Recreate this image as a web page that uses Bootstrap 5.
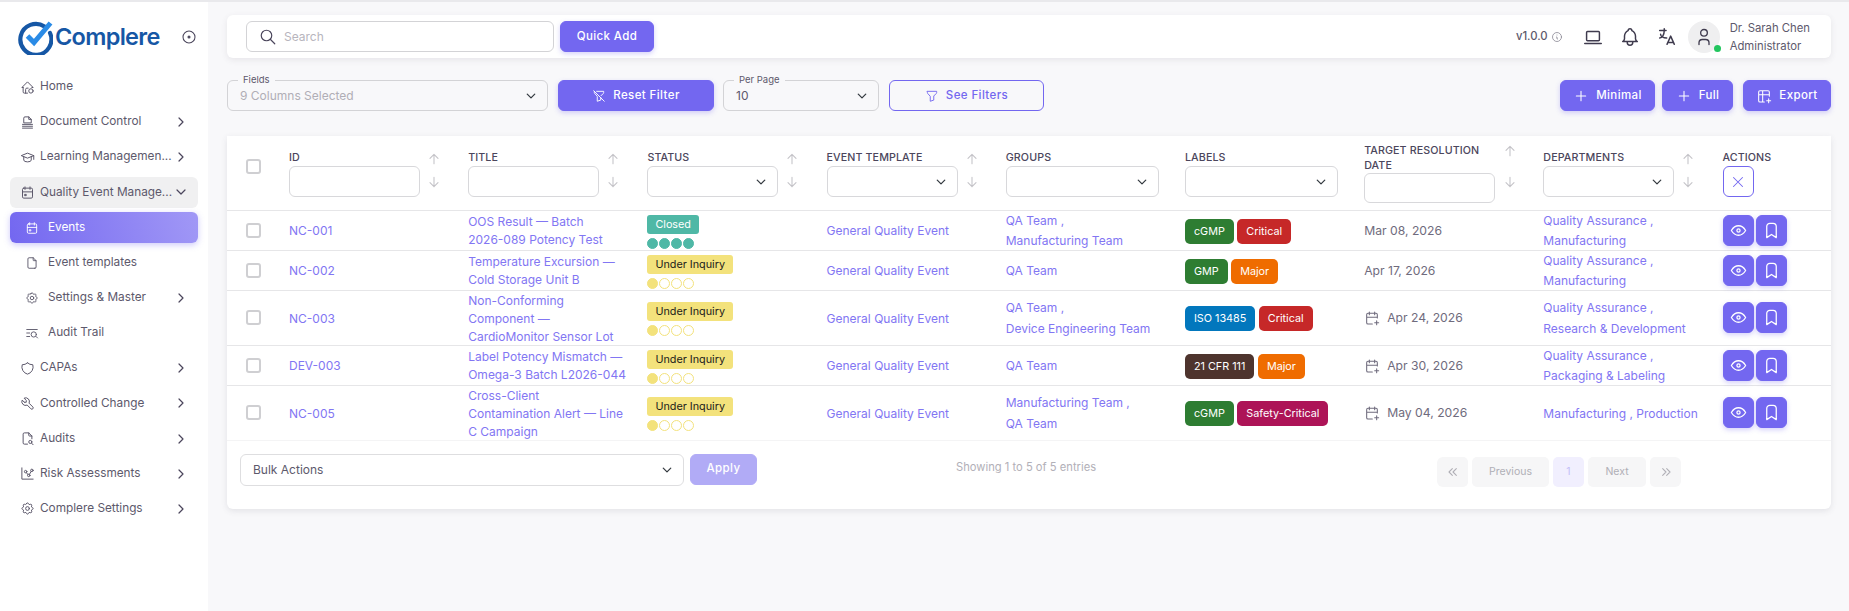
<!DOCTYPE html>
<html lang="en"><head><meta charset="utf-8"><title>Complere</title>
<link rel="stylesheet" href="https://cdn.jsdelivr.net/npm/bootstrap@5.3.0/dist/css/bootstrap.min.css">
<style>
:root{--brand:#7367f0;--ink:#5d596c;--linkc:#8276f3}
html,body{height:100%}
body{font-family:Inter,"Liberation Sans",sans-serif;font-size:12px;background:#f8f8fa;color:var(--ink);border-top:2px solid #e9e9ec;overflow:hidden}
.ico{width:16px;height:16px;fill:none;stroke:currentColor;stroke-width:1.6;stroke-linecap:round;stroke-linejoin:round;flex:none}
.shell{height:100%}
.side{width:208px;background:#fff;flex:none;padding:0 10px}
.brandrow{height:69.500px;padding-left:7px}
.brandtxt{font-size:23.500px;font-weight:600;color:#1657a5;letter-spacing:-.7px;margin-left:2px;line-height:1}
.target{margin-left:auto;margin-right:1px;color:#4b465c}
.sideitem{height:31px;margin-bottom:4.170px;padding:0 9px 0 10px;border-radius:6px;color:var(--ink);font-size:11.800px;text-decoration:none;gap:5px}
.sideitem .lbl{flex:1;min-width:0;white-space:nowrap}
.sideitem .ico{width:15px;height:15px}
.sideitem .chev{width:16px;height:16px;stroke-width:1.8;color:#4b465c}
.sideitem.open{background:#f0f0f1}
.sideitem.sub{padding-left:15px;gap:9px}
.sideitem.sub .ico{width:14px;height:14px}
.sideitem.sub .chev{width:16px;height:16px}
.sideitem.cur{background:linear-gradient(72deg,#7367f0,#a198f6);color:#fff;box-shadow:0 2px 6px rgba(115,103,240,.35)}
.mainpane{min-width:0;padding:13px 18px 0 19px}
.topbar{height:43px;background:#fff;border-radius:6px;box-shadow:0 2px 6px rgba(75,70,92,.1);padding:0 21px 0 19px}
.searchbox{width:308px;height:31px;border:1px solid #d3d3d6;border-radius:6px;padding-left:12px;gap:5px;color:#4b465c}
.searchbox .ico{width:18px;height:18px}
.searchbox input{border:0;outline:0;flex:1;min-width:0;font-size:12px;background:transparent}
.searchbox input::placeholder{color:#b7b5bd}
.btn-brand{--bs-btn-color:#fff;--bs-btn-bg:var(--brand);--bs-btn-border-color:var(--brand);--bs-btn-hover-color:#fff;--bs-btn-hover-bg:#6659e8;--bs-btn-hover-border-color:#6659e8;--bs-btn-font-size:11.500px;--bs-btn-font-weight:500;--bs-btn-border-radius:6px;--bs-btn-padding-y:0;--bs-btn-padding-x:0;height:31px;letter-spacing:.4px;box-shadow:0 2px 5px rgba(115,103,240,.3);gap:7px}
.quick{width:94px;margin-left:6px}
.ver{font-weight:500;font-size:11.300px;color:#5d596c;gap:3px}
.ver .ico{width:12px;height:12px;color:#8a8894}
.topico{color:#3f3b4e}
.topico .ico{width:22px;height:22px}
.gap-a{margin-left:19px}.gap-b{margin-left:15px}.gap-c{margin-left:10px}
.avatar{width:32px;height:32px;border-radius:50%;background:#efeff0;color:#3f3b4e}
.avatar .ico{width:20px;height:20px}
.onl{position:absolute;right:-1px;bottom:1px;width:7px;height:7px;border-radius:50%;background:#22c55e}
.who{font-size:11.300px;line-height:18px;margin-left:10px;color:#5d596c}
.filters{margin-top:22px;height:31px}
.fieldwrap{position:relative}
.fieldwrap>span{position:absolute;left:11px;top:-6px;background:#f8f8fa;padding:0 5px;font-size:9.500px;line-height:12px;color:#5d596c;z-index:1}
.sel{height:31px;padding:0 28px 0 12px;font-size:12px;border-color:#d3d3d6;border-radius:6px;background-color:transparent;color:#5d596c;background-size:12px 10px;background-position:right 10px center}
.sel.muted{color:#b0aeb6}
.wf{width:321px}.wr{width:156px;margin-left:10px}.wp{width:156px;margin-left:9px}
.wsee{width:155px;margin-left:10px;height:31px;border:1px solid var(--brand);color:var(--brand);border-radius:6px;font-size:11.500px;gap:7px;background:transparent;letter-spacing:.4px;font-weight:500}
.wmin{width:95px}.wful{width:71px;margin-left:7px}.wexp{width:88px;margin-left:10px}
.smi{width:14px;height:14px}
.panel{margin-top:25px;height:373px;background:#fff;border:0;border-radius:0 0 6px 6px;box-shadow:0 2px 6px rgba(75,70,92,.12)}
.grid{table-layout:fixed;width:100%;margin:0;--bs-table-border-color:#e6e6e8;font-size:12px}
.grid th,.grid td{padding:0 0 0 10px;vertical-align:middle;color:inherit}
.grid tbody td{padding-top:2px}
.grid tbody td.c0,.grid tbody td:last-child{padding-top:0}
.grid thead th{height:74px;padding-top:14px;vertical-align:top;font-weight:500;font-size:10.700px;text-transform:uppercase;color:#4b465c;line-height:16px;letter-spacing:.1px}
.grid thead th.tall{padding-top:7px;line-height:15px}
.grid .c0{width:52px;padding-left:19px}
.grid .cn{width:179.200px}
.grid .cl{width:118.400px}
.hcell{width:131px}
.hwide{width:153px}
.hbox{height:31px;width:100%;border:1px solid #d8d8db;border-radius:6px;background-color:#fff;display:block}
.grid thead th.tall .hbox{height:30px}
.arrows{margin-left:6px;width:16px;margin-top:1px;gap:7px;color:#c4c3c8}
.tall .arrows{margin-top:0;gap:15px;margin-left:7px}
.arrows .ico{width:16px;height:16px}
.grid .form-check-input{width:15px;height:15px;margin:0;border:2px solid #cfcfd2;border-radius:3px;display:block}
.grid thead .form-check-input{margin-top:9px;margin-left:0}
.clearb{width:31px;height:31px;border:1px solid var(--brand);border-radius:6px;color:var(--brand);background:#fff;padding:0}
.clearb .ico{width:18px;height:18px;stroke-width:1.400}
.r40 td{height:40px}.r55 td{height:55px}
.grid tbody tr:last-child td{border-color:#f4f4f5}
.grid a{color:var(--linkc);text-decoration:none}
.ttl{line-height:18px;display:block;margin:-2px 0}
.two{line-height:20.500px;display:block;margin:-2px 0}
.grid td.dt,.dt{color:#6f6b7d;font-size:12.200px}
.dt{gap:7px}
.dt .ico{width:16px;height:16px}
.stat{display:block;width:max-content;height:19px;line-height:19px;padding:0 8px;border-radius:3px;font-size:10.800px;font-weight:400;margin-top:1px}
.st-c{background:#4fb8a6;color:#fff}
.st-u{background:#f3e27c;color:#1b1b1b}
.dots{gap:1px;margin-top:4px}
.dots i{display:block;width:11px;height:11px;border-radius:50%;border:1px solid #f3e27c}
.dots i.on{background:#f3e27c}
.dots.tl i{border-color:#4fb8a6;background:#4fb8a6}
.lab{display:inline-block;height:25px;line-height:25px;padding:0 9px;border-radius:5px;color:#fff;font-size:10.800px;margin-right:3.500px}
.g{background:#2e7d32}.rd{background:#c62828}.og{background:#ef6c00}.bl{background:#0277bd}.br{background:#4e342e}.mg{background:#ad1457}
.act{width:31px;height:31px;padding:0;margin-right:2px}
.act .ico{width:19px;height:19px}
.foot{padding:13px 0 0 13px}
.bulk{width:444px;flex:none;height:32px;padding-left:12px;border-color:#dedee0;background-color:#fff}
.applyb{width:67px;flex:none;margin-left:6px;opacity:.55;box-shadow:none;height:31px}
.shown{margin-left:199px;margin-top:5px;color:#b2b0b8;font-size:11.200px;line-height:16px;white-space:nowrap}
.pager{margin:3px 150px 0 auto;gap:5px;--bs-pagination-border-width:0}
.pager .page-link{height:30px;line-height:30px;padding:0;text-align:center;background:#f6f6f7;color:#b0afb6;border-radius:5px;font-size:10.500px;border:0}
.pager .page-link .ico{width:16px;height:16px}
.pager .cu .page-link{background:#f1effe;color:#c4bff8}
.pw1{width:31px}.pw2{width:76px}.pw3{width:30px}.pw4{width:57px}
</style></head>
<body>
<svg width="0" height="0" class="position-absolute"><defs>
<symbol id="home" viewBox="0 0 24 24"><path d="M5 12H3l9-9 9 9h-2M5 12v7a2 2 0 0 0 2 2h5M9 21v-6a2 2 0 0 1 2-2h2"/><circle cx="17.500" cy="17.500" r="3.500"/></symbol>
<symbol id="doc" viewBox="0 0 24 24"><path d="M6 12V5a2 2 0 0 1 2-2h6l4 4v5zM14 3v4h4M4 15h16M4 18h16M4 21h16"/></symbol>
<symbol id="school" viewBox="0 0 24 24"><path d="M22 9 12 5 2 9l10 4 10-4v6M6 10.600V16a6 3 0 0 0 12 0v-5.400"/></symbol>
<symbol id="cal" viewBox="0 0 24 24"><rect x="4" y="5" width="16" height="16" rx="2"/><path d="M16 3v4M8 3v4M4 11h16M8 15h2v2H8z"/></symbol>
<symbol id="file" viewBox="0 0 24 24"><path d="M14 3v4a1 1 0 0 0 1 1h4M17 21H7a2 2 0 0 1-2-2V5a2 2 0 0 1 2-2h7l5 5v11a2 2 0 0 1-2 2z"/></symbol>
<symbol id="gear" viewBox="0 0 24 24"><path d="M10.325 4.317c.426-1.756 2.924-1.756 3.35 0a1.724 1.724 0 0 0 2.573 1.066c1.543-.94 3.31.826 2.37 2.37a1.724 1.724 0 0 0 1.065 2.572c1.756.426 1.756 2.924 0 3.35a1.724 1.724 0 0 0-1.066 2.573c.94 1.543-.826 3.31-2.37 2.37a1.724 1.724 0 0 0-2.572 1.065c-.426 1.756-2.924 1.756-3.35 0a1.724 1.724 0 0 0-2.573-1.066c-1.543.94-3.31-.826-2.37-2.37a1.724 1.724 0 0 0-1.065-2.572c-1.756-.426-1.756-2.924 0-3.35a1.724 1.724 0 0 0 1.066-2.573c-.94-1.543.826-3.31 2.37-2.37c1 .608 2.296.07 2.572-1.065z"/><circle cx="12" cy="12" r="3"/></symbol>
<symbol id="audit" viewBox="0 0 24 24"><path d="M3 6h18M3 12h5M3 18h5M19 18l2.500 2.500"/><circle cx="15" cy="14.500" r="4.500"/></symbol>
<symbol id="shield" viewBox="0 0 24 24"><path d="M12 3a12 12 0 0 0 8.500 3A12 12 0 0 1 12 21 12 12 0 0 1 3.500 6 12 12 0 0 0 12 3"/></symbol>
<symbol id="tool" viewBox="0 0 24 24"><path d="M7 10h3V7L6.500 3.500a6 6 0 0 1 8 8l6 6a2 2 0 0 1-3 3l-6-6a6 6 0 0 1-8-8L7 10"/></symbol>
<symbol id="fsearch" viewBox="0 0 24 24"><path d="M14 3v4a1 1 0 0 0 1 1h4M12 21H7a2 2 0 0 1-2-2V5a2 2 0 0 1 2-2h7l5 5v4.500M18.500 19.500 21 22"/><circle cx="16.500" cy="17.500" r="2.500"/></symbol>
<symbol id="chart" viewBox="0 0 24 24"><path d="M3 3v18h18M10.200 10.600l2.300 2.900M15.100 13.300l2.800-4.600"/><circle cx="9" cy="9" r="2"/><circle cx="19" cy="7" r="2"/><circle cx="14" cy="15" r="2"/></symbol>
<symbol id="cr" viewBox="0 0 24 24"><path d="m9 6 6 6-6 6"/></symbol>
<symbol id="cd" viewBox="0 0 24 24"><path d="m6 9 6 6 6-6"/></symbol>
<symbol id="search" viewBox="0 0 24 24"><circle cx="10" cy="10" r="7"/><path d="m21 21-6-6"/></symbol>
<symbol id="foff" viewBox="0 0 24 24"><path d="M8 4h12v2.200a2 2 0 0 1-.6 1.400l-3.900 3.900m-.5 3.500v4l-6 2v-8.500L4.500 7.500A2 2 0 0 1 4 6.300V4M3 3l18 18"/></symbol>
<symbol id="fil" viewBox="0 0 24 24"><path d="M4 4h16v2.200a2 2 0 0 1-.6 1.400L15 12v7l-6 2v-8.500L4.500 7.500A2 2 0 0 1 4 6.200z"/></symbol>
<symbol id="plus" viewBox="0 0 24 24"><path d="M12 5v14M5 12h14"/></symbol>
<symbol id="tplus" viewBox="0 0 24 24"><path d="M12.500 21H6a2 2 0 0 1-2-2V6a2 2 0 0 1 2-2h12a2 2 0 0 1 2 2v6.500M4 10h16M10 4v17M16 19h6M19 16v6"/></symbol>
<symbol id="info" viewBox="0 0 24 24"><circle cx="12" cy="12" r="9"/><path d="M12 8h.01M11 12h1v4h1"/></symbol>
<symbol id="lap" viewBox="0 0 24 24"><path d="M3 19h18"/><rect x="5" y="6" width="14" height="10" rx="1"/></symbol>
<symbol id="bell" viewBox="0 0 24 24"><path d="M10 5a2 2 0 1 1 4 0 7 7 0 0 1 4 6v3a4 4 0 0 0 2 3H4a4 4 0 0 0 2-3v-3a7 7 0 0 1 4-6M9 17v1a3 3 0 0 0 6 0v-1"/></symbol>
<symbol id="lang" viewBox="0 0 24 24"><path d="M4 5h7M9 3v2c0 4.418-2.239 8-5 8M5 9c0 2.144 2.952 3.908 6.700 4M12 20l4-9 4 9M19.100 18h-6.200"/></symbol>
<symbol id="user" viewBox="0 0 24 24"><circle cx="12" cy="7" r="4"/><path d="M6 21v-2a4 4 0 0 1 4-4h4a4 4 0 0 1 4 4v2"/></symbol>
<symbol id="up" viewBox="0 0 24 24"><path d="M12 5v14M18 11l-6-6M6 11l6-6"/></symbol>
<symbol id="dn" viewBox="0 0 24 24"><path d="M12 5v14M18 13l-6 6M6 13l6 6"/></symbol>
<symbol id="eye" viewBox="0 0 24 24"><path d="M10 12a2 2 0 1 0 4 0 2 2 0 0 0-4 0"/><path d="M21 12c-2.400 4-5.400 6-9 6s-6.600-2-9-6c2.400-4 5.400-6 9-6s6.600 2 9 6"/></symbol>
<symbol id="bm" viewBox="0 0 24 24"><path d="M18 7v14l-6-4-6 4V7a4 4 0 0 1 4-4h4a4 4 0 0 1 4 4"/></symbol>
<symbol id="calp" viewBox="0 0 24 24"><path d="M12.500 21H6a2 2 0 0 1-2-2V7a2 2 0 0 1 2-2h12a2 2 0 0 1 2 2v5M16 3v4M8 3v4M4 11h16M16 19h6M19 16v6"/></symbol>
<symbol id="x" viewBox="0 0 24 24"><path d="M18 6 6 18M6 6l12 12"/></symbol>
<symbol id="cl" viewBox="0 0 24 24"><path d="m11 7-5 5 5 5M17 7l-5 5 5 5"/></symbol>
<symbol id="crr" viewBox="0 0 24 24"><path d="m7 7 5 5-5 5M13 7l5 5-5 5"/></symbol>
</defs></svg>

<div class="shell d-flex">
<aside class="side">
 <div class="brandrow d-flex align-items-center">
  <svg width="36" height="36" viewBox="0 0 36 36" class="flex-none"><path d="M27.500 7.500A15.500 15.500 0 1 0 33 14" fill="none" stroke="#1657a5" stroke-width="4.200" stroke-linecap="round"/><path d="M10.500 17l6.500 6.500L33.500 4" fill="none" stroke="#2a8be6" stroke-width="5"/></svg>
  <span class="brandtxt">Complere</span>
  <svg class="ico target" viewBox="0 0 24 24"><circle cx="12" cy="12" r="9"/><circle cx="12" cy="12" r="1.500" fill="currentColor"/></svg>
 </div>
 <nav class="d-flex flex-column">
  <a class="sideitem d-flex align-items-center" href="#"><svg class="ico"><use href="#home"/></svg><span class="lbl">Home</span></a>
  <a class="sideitem d-flex align-items-center" href="#"><svg class="ico"><use href="#doc"/></svg><span class="lbl">Document Control</span><svg class="ico chev"><use href="#cr"/></svg></a>
  <a class="sideitem d-flex align-items-center" href="#"><svg class="ico"><use href="#school"/></svg><span class="lbl">Learning Managemen...</span><svg class="ico chev"><use href="#cr"/></svg></a>
  <a class="sideitem open d-flex align-items-center" href="#"><svg class="ico"><use href="#cal"/></svg><span class="lbl">Quality Event Manage...</span><svg class="ico chev"><use href="#cd"/></svg></a>
  <a class="sideitem sub cur d-flex align-items-center" href="#"><svg class="ico"><use href="#cal"/></svg><span class="lbl">Events</span></a>
  <a class="sideitem sub d-flex align-items-center" href="#"><svg class="ico"><use href="#file"/></svg><span class="lbl">Event templates</span></a>
  <a class="sideitem sub d-flex align-items-center" href="#"><svg class="ico"><use href="#gear"/></svg><span class="lbl">Settings &amp; Master</span><svg class="ico chev"><use href="#cr"/></svg></a>
  <a class="sideitem sub d-flex align-items-center" href="#"><svg class="ico"><use href="#audit"/></svg><span class="lbl">Audit Trail</span></a>
  <a class="sideitem d-flex align-items-center" href="#"><svg class="ico"><use href="#shield"/></svg><span class="lbl">CAPAs</span><svg class="ico chev"><use href="#cr"/></svg></a>
  <a class="sideitem d-flex align-items-center" href="#"><svg class="ico"><use href="#tool"/></svg><span class="lbl">Controlled Change</span><svg class="ico chev"><use href="#cr"/></svg></a>
  <a class="sideitem d-flex align-items-center" href="#"><svg class="ico"><use href="#fsearch"/></svg><span class="lbl">Audits</span><svg class="ico chev"><use href="#cr"/></svg></a>
  <a class="sideitem d-flex align-items-center" href="#"><svg class="ico"><use href="#chart"/></svg><span class="lbl">Risk Assessments</span><svg class="ico chev"><use href="#cr"/></svg></a>
  <a class="sideitem d-flex align-items-center" href="#"><svg class="ico"><use href="#gear"/></svg><span class="lbl">Complere Settings</span><svg class="ico chev"><use href="#cr"/></svg></a>
 </nav>
</aside>

<main class="mainpane flex-grow-1">
 <div class="topbar d-flex align-items-center">
  <label class="searchbox d-flex align-items-center mb-0"><svg class="ico"><use href="#search"/></svg><input type="text" placeholder="Search"></label>
  <button class="btn btn-brand quick d-inline-flex align-items-center justify-content-center">Quick Add</button>
  <div class="ver d-flex align-items-center ms-auto"><span>v1.0.0</span><svg class="ico"><use href="#info"/></svg></div>
  <span class="topico d-flex gap-a"><svg class="ico"><use href="#lap"/></svg></span>
  <span class="topico d-flex gap-b"><svg class="ico"><use href="#bell"/></svg></span>
  <span class="topico d-flex gap-b"><svg class="ico"><use href="#lang"/></svg></span>
  <span class="avatar gap-c position-relative d-flex align-items-center justify-content-center"><svg class="ico"><use href="#user"/></svg><span class="onl"></span></span>
  <div class="who"><div>Dr. Sarah Chen</div><div>Administrator</div></div>
 </div>

 <div class="filters d-flex">
  <div class="fieldwrap wf"><span>Fields</span><select class="form-select sel muted"><option>9 Columns Selected</option></select></div>
  <button class="btn btn-brand wr d-inline-flex align-items-center justify-content-center"><svg class="ico smi"><use href="#foff"/></svg>Reset Filter</button>
  <div class="fieldwrap wp"><span>Per Page</span><select class="form-select sel"><option>10</option></select></div>
  <button class="btn wsee d-inline-flex align-items-center justify-content-center"><svg class="ico smi"><use href="#fil"/></svg>See Filters</button>
  <button class="btn btn-brand wmin ms-auto d-inline-flex align-items-center justify-content-center"><svg class="ico"><use href="#plus"/></svg>Minimal</button>
  <button class="btn btn-brand wful d-inline-flex align-items-center justify-content-center"><svg class="ico"><use href="#plus"/></svg>Full</button>
  <button class="btn btn-brand wexp d-inline-flex align-items-center justify-content-center"><svg class="ico"><use href="#tplus"/></svg>Export</button>
 </div>

 <section class="panel">
  <table class="table grid">
   <thead><tr>
    <th class="c0"><input class="form-check-input" type="checkbox" aria-label="all"></th>
    <th class="cn"><div class="d-flex"><div class="hcell">ID<input class="hbox" type="text"></div><div class="arrows d-flex flex-column"><svg class="ico"><use href="#up"/></svg><svg class="ico"><use href="#dn"/></svg></div></div></th>
    <th class="cn"><div class="d-flex"><div class="hcell">Title<input class="hbox" type="text"></div><div class="arrows d-flex flex-column"><svg class="ico"><use href="#up"/></svg><svg class="ico"><use href="#dn"/></svg></div></div></th>
    <th class="cn"><div class="d-flex"><div class="hcell">Status<select class="form-select sel hbox"></select></div><div class="arrows d-flex flex-column"><svg class="ico"><use href="#up"/></svg><svg class="ico"><use href="#dn"/></svg></div></div></th>
    <th class="cn"><div class="d-flex"><div class="hcell">Event Template<select class="form-select sel hbox"></select></div><div class="arrows d-flex flex-column"><svg class="ico"><use href="#up"/></svg><svg class="ico"><use href="#dn"/></svg></div></div></th>
    <th class="cn"><div class="hwide">Groups<select class="form-select sel hbox"></select></div></th>
    <th class="cn"><div class="hwide">Labels<select class="form-select sel hbox"></select></div></th>
    <th class="cn tall"><div class="d-flex"><div class="hcell">Target Resolution Date<input class="hbox" type="text"></div><div class="arrows d-flex flex-column"><svg class="ico"><use href="#up"/></svg><svg class="ico"><use href="#dn"/></svg></div></div></th>
    <th class="cn"><div class="d-flex"><div class="hcell">Departments<select class="form-select sel hbox"></select></div><div class="arrows d-flex flex-column"><svg class="ico"><use href="#up"/></svg><svg class="ico"><use href="#dn"/></svg></div></div></th>
    <th class="cl">Actions<button class="clearb d-flex align-items-center justify-content-center" aria-label="clear"><svg class="ico"><use href="#x"/></svg></button></th>
   </tr></thead>
   <tbody>
    <tr class="r40">
     <td class="c0"><input class="form-check-input" type="checkbox" aria-label="row"></td>
     <td><a href="#">NC-001</a></td>
     <td><a class="ttl" href="#">OOS Result — Batch<br>2026-089 Potency Test</a></td>
     <td><span class="stat st-c">Closed</span><div class="dots tl d-flex"><i></i><i></i><i></i><i></i></div></td>
     <td><a href="#">General Quality Event</a></td>
     <td><a class="two" href="#">QA Team ,<br>Manufacturing Team</a></td>
     <td><span class="lab g">cGMP</span><span class="lab rd">Critical</span></td>
     <td class="dt">Mar 08, 2026</td>
     <td><a class="two" href="#">Quality Assurance ,<br>Manufacturing</a></td>
     <td><div class="d-flex"><button class="btn btn-brand act d-flex align-items-center justify-content-center" aria-label="view"><svg class="ico"><use href="#eye"/></svg></button><button class="btn btn-brand act d-flex align-items-center justify-content-center" aria-label="save"><svg class="ico"><use href="#bm"/></svg></button></div></td>
    </tr>
    <tr class="r40">
     <td class="c0"><input class="form-check-input" type="checkbox" aria-label="row"></td>
     <td><a href="#">NC-002</a></td>
     <td><a class="ttl" href="#">Temperature Excursion —<br>Cold Storage Unit B</a></td>
     <td><span class="stat st-u">Under Inquiry</span><div class="dots d-flex"><i class="on"></i><i></i><i></i><i></i></div></td>
     <td><a href="#">General Quality Event</a></td>
     <td><a href="#">QA Team</a></td>
     <td><span class="lab g">GMP</span><span class="lab og">Major</span></td>
     <td class="dt">Apr 17, 2026</td>
     <td><a class="two" href="#">Quality Assurance ,<br>Manufacturing</a></td>
     <td><div class="d-flex"><button class="btn btn-brand act d-flex align-items-center justify-content-center" aria-label="view"><svg class="ico"><use href="#eye"/></svg></button><button class="btn btn-brand act d-flex align-items-center justify-content-center" aria-label="save"><svg class="ico"><use href="#bm"/></svg></button></div></td>
    </tr>
    <tr class="r55">
     <td class="c0"><input class="form-check-input" type="checkbox" aria-label="row"></td>
     <td><a href="#">NC-003</a></td>
     <td><a class="ttl" href="#">Non-Conforming<br>Component —<br>CardioMonitor Sensor Lot</a></td>
     <td><span class="stat st-u">Under Inquiry</span><div class="dots d-flex"><i class="on"></i><i></i><i></i><i></i></div></td>
     <td><a href="#">General Quality Event</a></td>
     <td><a class="two" href="#">QA Team ,<br>Device Engineering Team</a></td>
     <td><span class="lab bl">ISO 13485</span><span class="lab rd">Critical</span></td>
     <td><div class="dt d-flex align-items-center"><svg class="ico"><use href="#calp"/></svg>Apr 24, 2026</div></td>
     <td><a class="two" href="#">Quality Assurance ,<br>Research &amp; Development</a></td>
     <td><div class="d-flex"><button class="btn btn-brand act d-flex align-items-center justify-content-center" aria-label="view"><svg class="ico"><use href="#eye"/></svg></button><button class="btn btn-brand act d-flex align-items-center justify-content-center" aria-label="save"><svg class="ico"><use href="#bm"/></svg></button></div></td>
    </tr>
    <tr class="r40">
     <td class="c0"><input class="form-check-input" type="checkbox" aria-label="row"></td>
     <td><a href="#">DEV-003</a></td>
     <td><a class="ttl" href="#">Label Potency Mismatch —<br>Omega-3 Batch L2026-044</a></td>
     <td><span class="stat st-u">Under Inquiry</span><div class="dots d-flex"><i class="on"></i><i></i><i></i><i></i></div></td>
     <td><a href="#">General Quality Event</a></td>
     <td><a href="#">QA Team</a></td>
     <td><span class="lab br">21 CFR 111</span><span class="lab og">Major</span></td>
     <td><div class="dt d-flex align-items-center"><svg class="ico"><use href="#calp"/></svg>Apr 30, 2026</div></td>
     <td><a class="two" href="#">Quality Assurance ,<br>Packaging &amp; Labeling</a></td>
     <td><div class="d-flex"><button class="btn btn-brand act d-flex align-items-center justify-content-center" aria-label="view"><svg class="ico"><use href="#eye"/></svg></button><button class="btn btn-brand act d-flex align-items-center justify-content-center" aria-label="save"><svg class="ico"><use href="#bm"/></svg></button></div></td>
    </tr>
    <tr class="r55">
     <td class="c0"><input class="form-check-input" type="checkbox" aria-label="row"></td>
     <td><a href="#">NC-005</a></td>
     <td><a class="ttl" href="#">Cross-Client<br>Contamination Alert — Line<br>C Campaign</a></td>
     <td><span class="stat st-u">Under Inquiry</span><div class="dots d-flex"><i class="on"></i><i></i><i></i><i></i></div></td>
     <td><a href="#">General Quality Event</a></td>
     <td><a class="two" href="#">Manufacturing Team ,<br>QA Team</a></td>
     <td><span class="lab g">cGMP</span><span class="lab mg">Safety-Critical</span></td>
     <td><div class="dt d-flex align-items-center"><svg class="ico"><use href="#calp"/></svg>May 04, 2026</div></td>
     <td><a class="text-nowrap" href="#">Manufacturing , Production</a></td>
     <td><div class="d-flex"><button class="btn btn-brand act d-flex align-items-center justify-content-center" aria-label="view"><svg class="ico"><use href="#eye"/></svg></button><button class="btn btn-brand act d-flex align-items-center justify-content-center" aria-label="save"><svg class="ico"><use href="#bm"/></svg></button></div></td>
    </tr>
   </tbody>
  </table>
  <div class="foot d-flex align-items-start">
   <select class="form-select sel bulk"><option>Bulk Actions</option></select>
   <button class="btn btn-brand applyb d-inline-flex align-items-center justify-content-center">Apply</button>
   <div class="shown">Showing 1 to 5 of 5 entries</div>
   <ul class="pagination pager">
    <li class="page-item pw1"><a class="page-link d-flex align-items-center justify-content-center" href="#" aria-label="first"><svg class="ico"><use href="#cl"/></svg></a></li>
    <li class="page-item pw2"><a class="page-link" href="#">Previous</a></li>
    <li class="page-item pw3 cu"><a class="page-link" href="#">1</a></li>
    <li class="page-item pw4"><a class="page-link" href="#">Next</a></li>
    <li class="page-item pw3"><a class="page-link d-flex align-items-center justify-content-center" href="#" aria-label="last"><svg class="ico"><use href="#crr"/></svg></a></li>
   </ul>
  </div>
 </section>
</main>
</div>
<script src="https://cdn.jsdelivr.net/npm/bootstrap@5.3.0/dist/js/bootstrap.bundle.min.js"></script>
</body></html>
